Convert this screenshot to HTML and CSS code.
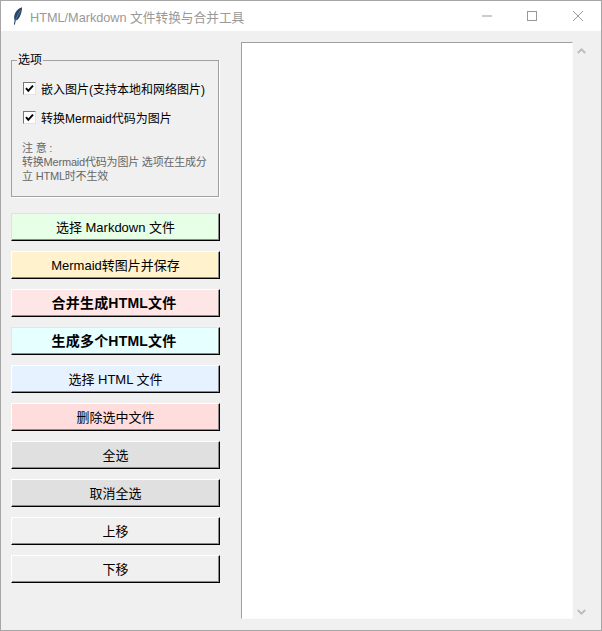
FILE: index.html
```html
<!DOCTYPE html>
<html lang="zh">
<head>
<meta charset="utf-8">
<title>HTML/Markdown 文件转换与合并工具</title>
<link rel="stylesheet" href="styles.css">
</head>
<body>
<div class="window">
  <header class="titlebar">
    <svg class="feather" width="10" height="18" viewBox="0 0 10 18"><path d="M9 0.3C5.8 1.2 2.6 4.2 1.5 8 .9 10.2 1 12 1.6 13L.9 17.6 1.9 17.7 2.7 13.6C4.9 13.2 6.4 11.2 7.3 8.6 8.4 5.8 9.2 2.6 9 0.3Z" fill="#27466b"/><path d="M7.6 3C6 5.6 4.4 9 2.6 13" stroke="#7f97b3" stroke-width=".6" fill="none"/></svg>
    <span class="title">HTML/Markdown 文件转换与合并工具</span>
    <div class="controls">
      <svg width="46" height="30" viewBox="0 0 46 30"><path d="M19 15h10" stroke="#999"/></svg>
      <svg width="46" height="30" viewBox="0 0 46 30"><rect x="18.5" y="10.5" width="9" height="9" fill="none" stroke="#999"/></svg>
      <svg width="46" height="30" viewBox="0 0 46 30"><path d="M18 10l10 10M28 10l-10 10" stroke="#999"/></svg>
    </div>
  </header>
  <main class="content">
    <aside class="sidebar">
      <fieldset class="options">
        <legend class="options-title">选项</legend>
        <label class="check"><span class="box"><svg width="11" height="11" viewBox="0 0 11 11"><path d="M2 5.2l2.3 2.6L9 2.6" fill="none" stroke="#000" stroke-width="2"/></svg></span>嵌入图片(支持本地和网络图片)</label>
        <label class="check"><span class="box"><svg width="11" height="11" viewBox="0 0 11 11"><path d="M2 5.2l2.3 2.6L9 2.6" fill="none" stroke="#000" stroke-width="2"/></svg></span>转换Mermaid代码为图片</label>
        <p class="note">注 意 :<br>转换Mermaid代码为图片 选项在生成分<br>立 HTML时不生效</p>
      </fieldset>
      <div class="actions">
        <button class="btn green">选择 Markdown 文件</button>
        <button class="btn yellow">Mermaid转图片并保存</button>
        <button class="btn pink strong">合并生成HTML文件</button>
        <button class="btn cyan strong">生成多个HTML文件</button>
        <button class="btn blue">选择 HTML 文件</button>
        <button class="btn red">删除选中文件</button>
        <button class="btn gray">全选</button>
        <button class="btn gray">取消全选</button>
        <button class="btn">上移</button>
        <button class="btn">下移</button>
      </div>
    </aside>
    <section class="listbox"></section>
    <div class="scrollbar">
      <svg width="9" height="6" viewBox="0 0 9 6"><path d="M0.8 5L4.5 1.4 8.2 5" fill="none" stroke="#bcbcbc" stroke-width="2"/></svg>
      <svg width="9" height="6" viewBox="0 0 9 6"><path d="M0.8 1L4.5 4.6 8.2 1" fill="none" stroke="#bcbcbc" stroke-width="2"/></svg>
    </div>
  </main>
</div>
</body>
</html>
```
FILE: styles.css
```css
* { box-sizing: border-box; }
html, body { margin: 0; height: 100%; }
body { font-family: "Liberation Sans", "Noto Sans CJK SC", sans-serif; font-size: 13px; color: #000; }
.window { width: 602px; height: 631px; border: 1px solid #a6a6a6; display: flex; flex-direction: column; background: #f0f0f0; }
.titlebar { height: 30px; flex: none; background: #fff; display: flex; align-items: center; padding-left: 12px; }
.feather { flex: none; }
.title { margin-left: 7px; color: #999; font-size: 12.7px; white-space: nowrap; flex: 1; }
.controls { display: flex; flex: none; }
.controls svg { display: block; }
.content { flex: 1; display: flex; min-height: 0; padding: 11px 11px 11px 10px; }
.sidebar { width: 209px; flex: none; padding-top: 11px; }
.options { margin: 0; padding: 7px 9px 0 11px; min-width: 0; width: 208px; height: 144px; border: 1px solid #a0a0a0; box-shadow: 1px 1px 0 #fff; }
.options-title { padding: 0 1px; margin-left: -6px; font-size: 12px; line-height: 14px; }
.check { display: flex; align-items: center; height: 29px; font-size: 12px; white-space: nowrap; }
.box { width: 13px; height: 13px; flex: none; margin-right: 5px; background: #fff; border: 1px solid; border-color: #777 #e3e3e3 #e3e3e3 #777; display: flex; }
.box svg { display: block; }
.note { margin: 9px 0 0 -1px; font-size: 11px; letter-spacing: -0.2px; line-height: 14px; color: #666; white-space: nowrap; }
.actions { display: flex; flex-direction: column; gap: 10px; margin-top: 16px; }
.btn { display: block; width: 209px; height: 28px; padding: 0 0 2px; font: inherit; font-size: 13px; color: #000; background: #f0f0f0; border: 1px solid; border-color: #fff #000 #000 #fff; box-shadow: inset -1px -1px 0 #8a8a8a; }
.strong { font-weight: 700; font-size: 14px; letter-spacing: 0.2px; padding-right: 3px; }
.green { background: #e6ffe6; border-color: #d2ecd2 #000 #000 #d2ecd2; }
.yellow { background: #fff2cc; }
.pink { background: #ffe6e6; }
.cyan { background: #e6ffff; border-color: #d0eeee #000 #000 #d0eeee; }
.blue { background: #e6f2ff; }
.red { background: #ffdddd; }
.gray { background: #e0e0e0; }
.listbox { width: 332px; flex: none; margin-left: 21px; background: #fff; border: 1px solid; border-color: #a0a0a0 #fbfbfb #fbfbfb #a0a0a0; }
.scrollbar { width: 17px; flex: none; display: flex; flex-direction: column; justify-content: space-between; align-items: center; padding: 6px 0 4px; }
.scrollbar svg { display: block; }
```
